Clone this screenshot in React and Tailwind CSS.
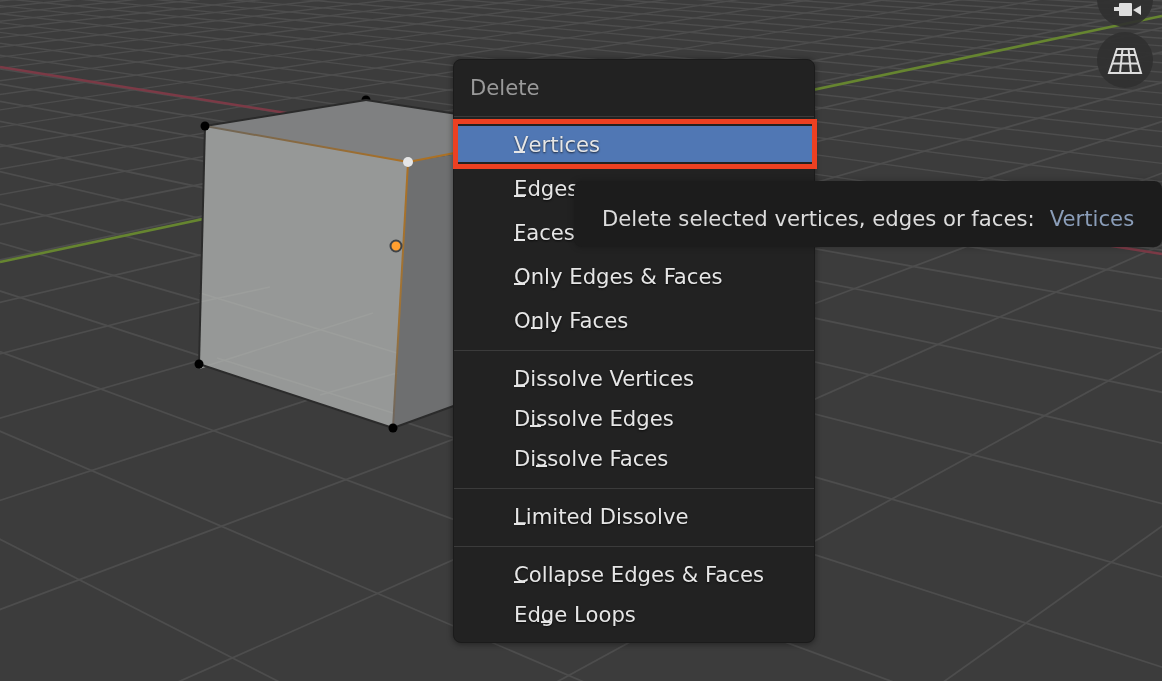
const FONT = "font-['DejaVu_Sans',sans-serif]";

// ground grid: lines of one family run through a vanishing point and are
// evenly spaced along a line parallel to the horizon
const VP_A = [-1325, -138];
const VP_B = [2209, -220];
const groundY = (t) => 700 - 0.0232 * t;

function gridLine(vp, t) {
  const x2 = vp[0] + (t - vp[0]) * 8;
  const y2 = vp[1] + (groundY(t) - vp[1]) * 8;
  return { x1: vp[0], y1: vp[1], x2, y2 };
}

function Viewport() {
  const familyA = Array.from({ length: 70 }, (_, k) => k);
  const familyB = Array.from({ length: 70 }, (_, k) => 2 - k);
  return (
    <svg className="absolute inset-0" width="1162" height="681" viewBox="0 0 1162 681">
      <defs>
        <linearGradient id="edgeTop" gradientUnits="userSpaceOnUse" x1="205" y1="126" x2="408" y2="162">
          <stop offset="0" stopColor="#6b6459" />
          <stop offset="1" stopColor="#ab7125" />
        </linearGradient>
        <linearGradient id="edgeSide" gradientUnits="userSpaceOnUse" x1="408" y1="162" x2="393" y2="428">
          <stop offset="0" stopColor="#ab7125" />
          <stop offset="0.6" stopColor="#9d7339" />
          <stop offset="1" stopColor="#6b6560" />
        </linearGradient>
      </defs>

      {familyA.map((k) => (
        <line key={k} {...gridLine(VP_A, 301 + k * 292.7)} stroke="#4d4d4d" strokeWidth={k < 12 ? 1.8 : 1.4} />
      ))}
      {familyB.map((k) => (
        <line key={k} {...gridLine(VP_B, 145 + k * 402)} stroke="#4d4d4d" strokeWidth={k > -8 ? 1.8 : 1.4} />
      ))}

      <line x1="0" y1="67" x2="1162" y2="254" stroke="#7b3a46" strokeWidth="2.6" />
      <line x1="0" y1="262" x2="1162" y2="16" stroke="#668530" strokeWidth="2.6" />

      <circle cx="366" cy="100" r="4.5" fill="#000" />
      <polygon points="205,126 366,100 470,116 470,152 408,162" fill="#7f8081" />
      <polygon points="408,162 470,152 470,400 393,428" fill="#6e6f70" />
      <polygon points="205,126 408,162 393,428 199,364" fill="#969897" />

      <g stroke="#9c9e9c" strokeWidth="1.6" fill="none">
        <line x1="200" y1="302" x2="270" y2="287" />
        <line x1="200" y1="293" x2="397" y2="353" />
        <line x1="200" y1="368" x2="373" y2="313" />
        <line x1="217" y1="358" x2="393" y2="413" />
        <line x1="320" y1="395" x2="397" y2="373" />
      </g>

      <g stroke="#2b2b2b" strokeWidth="2" fill="none">
        <line x1="205" y1="126" x2="366" y2="100" />
        <line x1="366" y1="100" x2="470" y2="116" />
        <line x1="205" y1="126" x2="199" y2="364" />
        <line x1="199" y1="364" x2="393" y2="428" />
        <line x1="393" y1="428" x2="470" y2="400" />
      </g>
      <line x1="205" y1="126" x2="408" y2="162" stroke="url(#edgeTop)" strokeWidth="2" />
      <line x1="408" y1="162" x2="470" y2="150" stroke="#ab7125" strokeWidth="2" />
      <line x1="408" y1="162" x2="393" y2="428" stroke="url(#edgeSide)" strokeWidth="2" />

      <circle cx="205" cy="126" r="4.5" fill="#000" />
      <circle cx="199" cy="364" r="4.5" fill="#000" />
      <circle cx="393" cy="428" r="4.5" fill="#000" />
      <circle cx="408" cy="162" r="5" fill="#e6e6e6" />
      <circle cx="396" cy="246" r="5.5" fill="#ff9f30" stroke="#3f4347" strokeWidth="2" />
    </svg>
  );
}

function GizmoButton({ className, children }) {
  return (
    <div className={`absolute left-[1097px] h-14 w-14 rounded-full bg-[#303030]/90 ${className}`}>
      <svg width="56" height="56" viewBox="0 0 56 56">
        {children}
      </svg>
    </div>
  );
}

function MenuItem({ label, hotkey, height = "h-10", active = false }) {
  const before = label.slice(0, hotkey);
  const letter = label[hotkey];
  const after = label.slice(hotkey + 1);
  return (
    <div className={`relative flex items-center pl-[60px] pt-[2px] ${height} ${active ? "bg-[#5077b4]" : ""}`}>
      {active ? (
        <span className="absolute -top-[3px] -bottom-[3px] -left-px -right-[3px] border-[5px] border-[#ec4022] shadow-[inset_0_2px_0_#222,inset_0_-2px_0_#222]" />
      ) : null}
      <span className="relative text-[21.2px] leading-none text-[#e6e6e6] [text-shadow:0_1px_2px_rgba(0,0,0,0.7)]">
        {before}
        <span className="relative">
          {letter}
          <span className="absolute left-0 top-[19px] h-[2px] w-[11px] bg-[#e6e6e6]" />
        </span>
        {after}
      </span>
    </div>
  );
}

function Separator({ className = "" }) {
  return <div className={`h-px bg-[#3b3b3b] ${className}`} />;
}

function DeleteMenu() {
  return (
    <div className="absolute left-[454px] top-[59px] flex w-[360px] flex-col rounded-lg border border-[#1b1b1b] bg-[#222222] pb-[8px] shadow-[0_1px_6px_rgba(0,0,0,0.45)] -mx-px box-content">
      <div className="flex h-[56px] items-center pl-[16px] text-[21.2px] leading-none text-[#9a9a9a]">Delete</div>
      <Separator className="mb-[5px]" />
      <MenuItem label="Vertices" hotkey={0} height="h-11" active />
      <MenuItem label="Edges" hotkey={0} height="h-11" />
      <MenuItem label="Faces" hotkey={0} height="h-11" />
      <MenuItem label="Only Edges & Faces" hotkey={0} height="h-11" />
      <MenuItem label="Only Faces" hotkey={1} height="h-11" />
      <Separator className="mt-[8px] mb-[7px]" />
      <MenuItem label="Dissolve Vertices" hotkey={0} />
      <MenuItem label="Dissolve Edges" hotkey={1} />
      <MenuItem label="Dissolve Faces" hotkey={2} />
      <Separator className="mt-[10px] mb-[7px]" />
      <MenuItem label="Limited Dissolve" hotkey={0} />
      <Separator className="mt-[10px] mb-[7px]" />
      <MenuItem label="Collapse Edges & Faces" hotkey={0} />
      <MenuItem label="Edge Loops" hotkey={2} />
    </div>
  );
}

function Tooltip() {
  return (
    <div className="absolute left-[574px] top-[181px] flex h-[66px] w-[588px] items-center rounded-lg bg-[#1c1c1c] pl-[28px] pt-[9px] text-[21.2px] leading-none text-[#dcdcdc] shadow-[0_0_6px_rgba(0,0,0,0.25)]">
      <span className="whitespace-pre">Delete selected vertices, edges or faces:</span>
      <span className="ml-[15px] text-[#8b9eb9]">Vertices</span>
    </div>
  );
}

export default function App() {
  return (
    <div className={`relative h-[681px] w-[1162px] overflow-hidden bg-[#3c3c3c] blur-[0.4px] ${FONT}`}>
      <Viewport />

      <GizmoButton className="top-[-29px]">
        <g fill="#dedede">
          <circle cx="22" cy="26" r="3" />
          <circle cx="30" cy="25" r="4" />
          <rect x="22" y="32" width="13" height="13" rx="1" />
          <rect x="17" y="36" width="5" height="4" />
          <polygon points="36,39 44,34.5 44,44" />
        </g>
      </GizmoButton>
      <GizmoButton className="top-[32px]">
        <g fill="none" stroke="#dedede" strokeWidth="2">
          <polygon points="20,17 37,17 44,41 12,41" />
          <line x1="17.5" y1="23" x2="39" y2="23" />
          <line x1="15" y1="31.5" x2="41.5" y2="31.5" />
          <line x1="25.5" y1="17" x2="23" y2="41" />
          <line x1="31.5" y1="17" x2="34" y2="41" />
        </g>
      </GizmoButton>

      <DeleteMenu />
      <Tooltip />
    </div>
  );
}
